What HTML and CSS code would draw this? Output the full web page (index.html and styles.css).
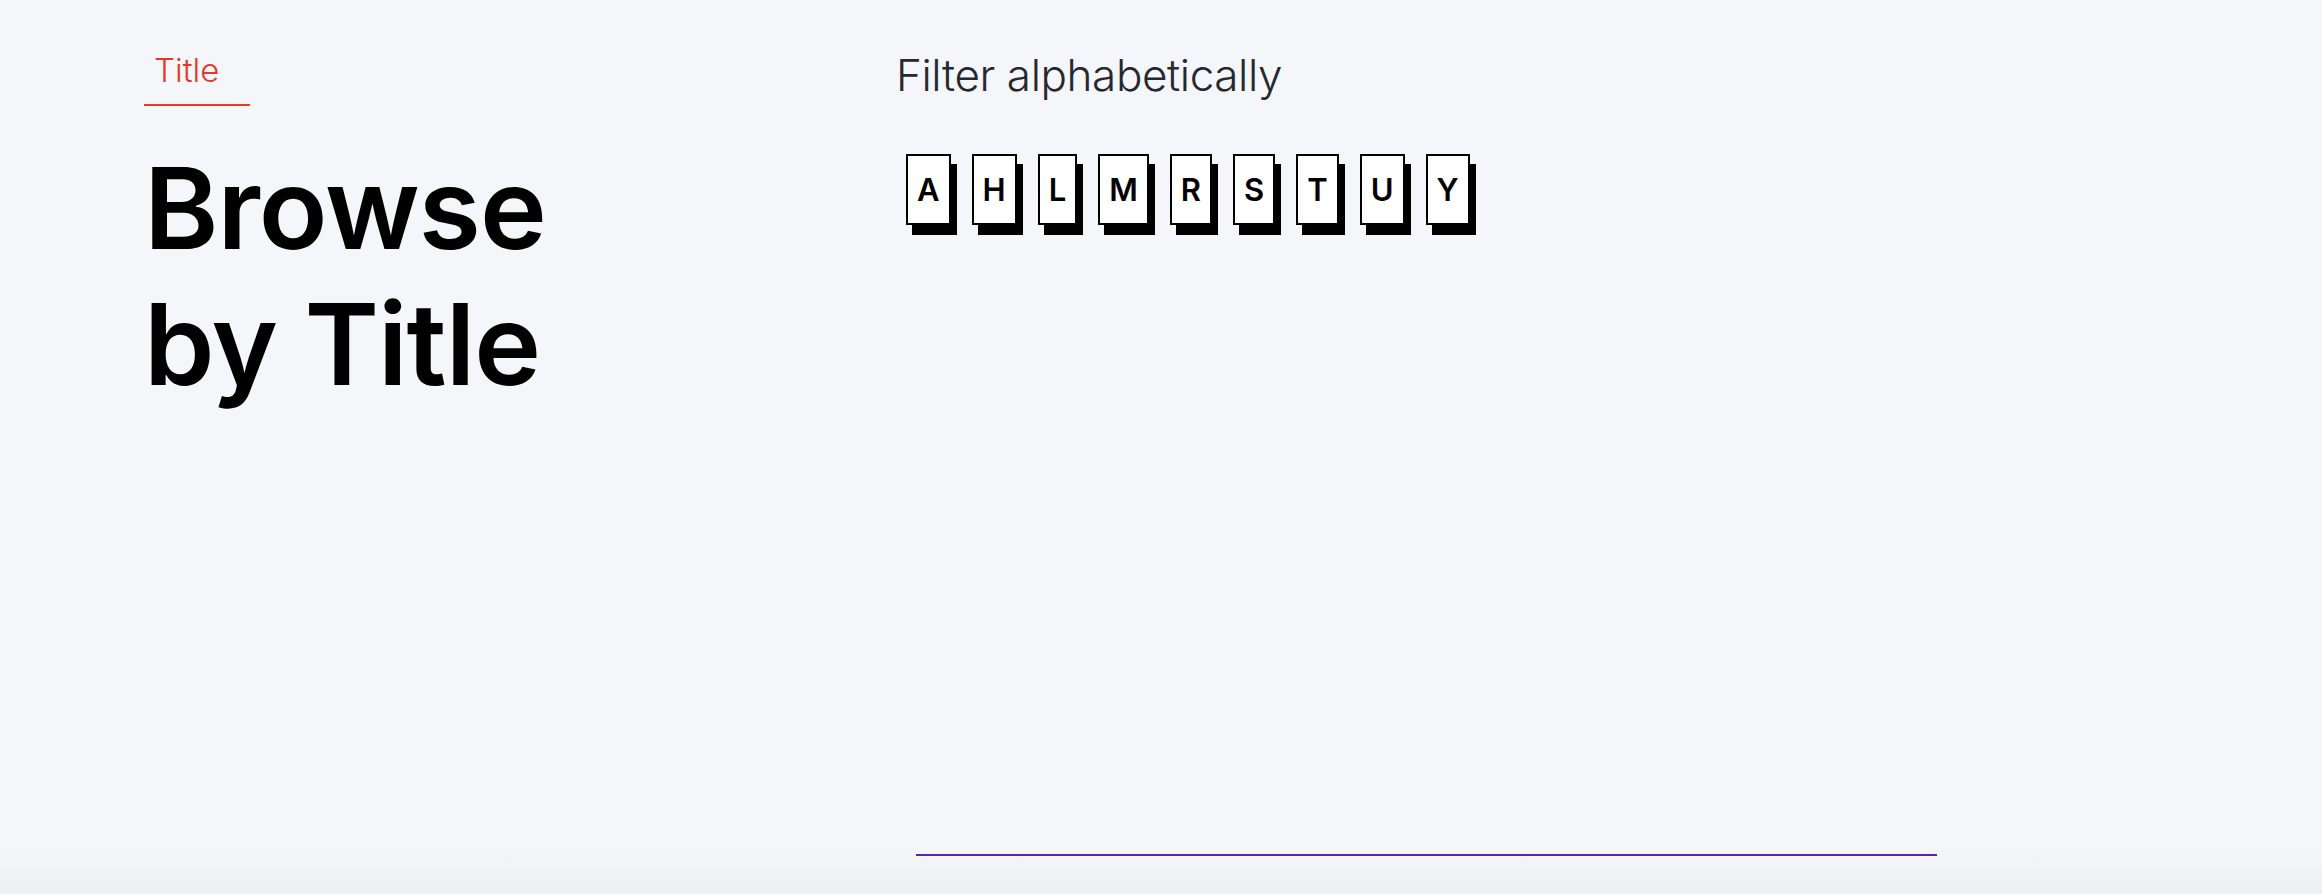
FILE: index.html
```html
<!DOCTYPE html>
<html lang="en">
<head>
<meta charset="utf-8">
<title>Browse by Title</title>
<link rel="stylesheet" href="styles.css">
</head>
<body>
<main class="page">
  <section class="intro">
    <nav class="tabs">
      <a class="tab tab-active" href="#">Title</a>
    </nav>
    <h1 class="heading">Browse<br>by Title</h1>
  </section>
  <section class="filter">
    <h2 class="filter-label">Filter alphabetically</h2>
    <ul class="letters">
      <li><a class="letter" href="#">A</a></li>
      <li><a class="letter" href="#">H</a></li>
      <li><a class="letter" href="#">L</a></li>
      <li><a class="letter" href="#">M</a></li>
      <li><a class="letter" href="#">R</a></li>
      <li><a class="letter" href="#">S</a></li>
      <li><a class="letter" href="#">T</a></li>
      <li><a class="letter" href="#">U</a></li>
      <li><a class="letter" href="#">Y</a></li>
    </ul>
    <div class="results"></div>
  </section>
</main>
</body>
</html>
```

FILE: styles.css
```css
* { box-sizing: border-box; }

html, body {
  margin: 0;
  padding: 0;
}

body {
  min-height: 894px;
  background: linear-gradient(to bottom, #f5f6fa 0, #f5f6fa 846px, #eeeff3 894px);
  font-family: Inter, "Noto Sans", "Liberation Sans", sans-serif;
  color: #000;
  overflow: hidden;
}

.page {
  display: grid;
  grid-template-columns: 752px 1fr;
  padding: 47px 0 0 144px;
}

.intro {
  display: flex;
  flex-direction: column;
  padding-top: 3px;
}

.tabs {
  display: flex;
}

.tab {
  display: inline-block;
  width: 106px;
  padding-left: 10px;
  font-size: 33px;
  font-weight: 300;
  line-height: 40px;
  padding-bottom: 14px;
  color: #e8382a;
  text-decoration: none;
  border-bottom: 2px solid #e8382a;
}

.heading {
  margin: 34px 0 0 0;
  font-size: 113px;
  font-weight: 600;
  line-height: 136px;
  letter-spacing: -1px;
  color: #000;
}

.filter {
  display: flex;
  flex-direction: column;
}

.filter-label {
  margin: 0;
  font-size: 44px;
  font-weight: 300;
  line-height: 56px;
  color: #25282f;
  letter-spacing: -0.4px;
}

.letters {
  list-style: none;
  margin: 51px 0 0 10px;
  padding: 0;
  display: flex;
  gap: 21px;
}

.letter {
  display: flex;
  align-items: center;
  justify-content: center;
  height: 71px;
  padding: 0 9px;
  background: #fff;
  border: 2px solid #000;
  box-shadow: 6px 10px 0 #000;
  font-size: 31px;
  font-weight: 600;
  color: #000;
  text-decoration: none;
}

.results {
  margin: 629px 0 0 20px;
  width: 1021px;
  height: 2px;
  background: #5a22a6;
}
```
